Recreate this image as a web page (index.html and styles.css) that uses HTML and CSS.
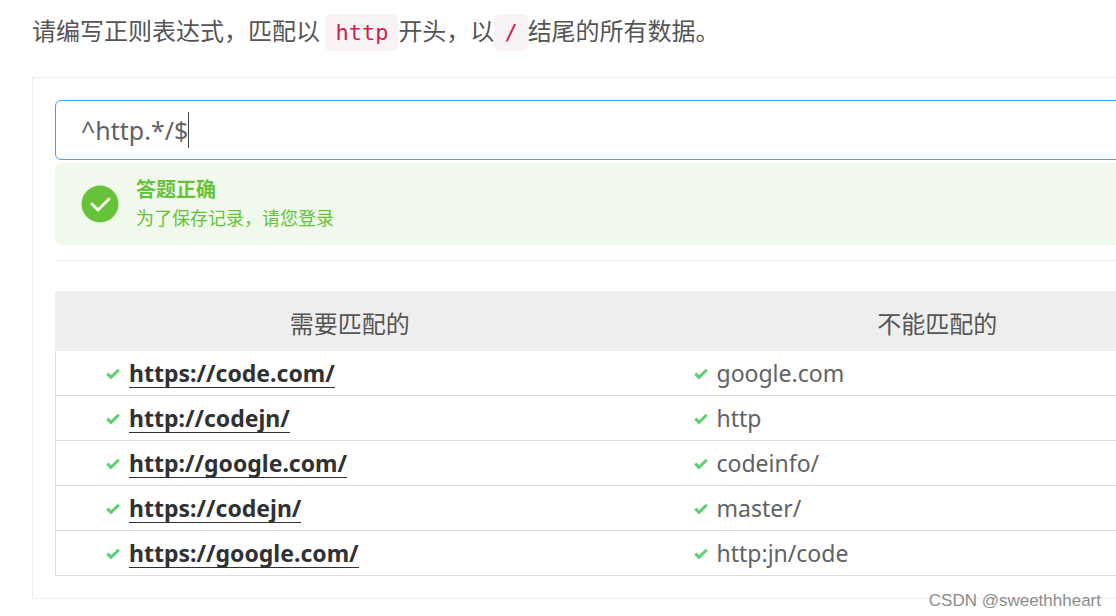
FILE: index.html
```html
<!DOCTYPE html>
<html lang="zh-CN">
<head>
<meta charset="utf-8">
<title>正则表达式练习</title>
<link rel="stylesheet" href="styles.css">
</head>
<body>
<svg class="sprite" aria-hidden="true">
  <symbol id="tick" viewBox="0 0 14 12"><path d="M1.300 5.600 5 9.400 12.800 1.800" fill="none" stroke="currentColor" stroke-width="3"/></symbol>
</svg>
<main class="page">
  <p class="question"><label for="answer">请编写正则表达式，匹配以 <code>http</code>开头，以<code>/</code>结尾的所有数据。</label></p>
  <section class="panel">
    <div class="field">
      <input class="answer" id="answer" type="text" value="^http.*/$" spellcheck="false" autocomplete="off">
      <span class="caret"></span>
    </div>
    <div class="alert" role="status">
      <svg class="alert-icon" viewBox="0 0 38 38" aria-hidden="true"><circle cx="19" cy="19" r="18.5" fill="#67c23a"/><path d="M11 19l6 6 11-11" fill="none" stroke="#f0f9eb" stroke-width="3" stroke-linecap="round" stroke-linejoin="round"/></svg>
      <div class="alert-body">
        <strong class="alert-title">答题正确</strong>
        <p class="alert-text">为了保存记录，请您登录</p>
      </div>
    </div>
    <hr class="divider">
    <table class="cases">
      <thead><tr><th scope="col">需要匹配的</th><th scope="col">不能匹配的</th></tr></thead>
      <tbody>
        <tr><td><svg class="tick"><use href="#tick"/></svg><b class="hit">https://code.com/</b></td><td><svg class="tick"><use href="#tick"/></svg>google.com</td></tr>
        <tr><td><svg class="tick"><use href="#tick"/></svg><b class="hit">http://codejn/</b></td><td><svg class="tick"><use href="#tick"/></svg>http</td></tr>
        <tr><td><svg class="tick"><use href="#tick"/></svg><b class="hit">http://google.com/</b></td><td><svg class="tick"><use href="#tick"/></svg>codeinfo/</td></tr>
        <tr><td><svg class="tick"><use href="#tick"/></svg><b class="hit">https://codejn/</b></td><td><svg class="tick"><use href="#tick"/></svg>master/</td></tr>
        <tr><td><svg class="tick"><use href="#tick"/></svg><b class="hit">https://google.com/</b></td><td><svg class="tick"><use href="#tick"/></svg>http:jn/code</td></tr>
      </tbody>
    </table>
  </section>
</main>
<div class="watermark">CSDN @sweethhheart</div>
</body>
</html>
```
FILE: styles.css
```css
* { box-sizing: border-box; }
body {
  margin: 0;
  overflow: hidden;
  background: #fff;
  color: #606266;
  font-family: "Noto Sans", "Noto Sans CJK SC", sans-serif;
  font-size: 23px;
}
.sprite { position: absolute; width: 0; height: 0; }
.page { padding: 11px 0 0 32px; overflow: hidden; }
.question {
  margin: 0 0 28px;
  font-family: "Noto Sans CJK SC", sans-serif;
  font-size: 24px;
  line-height: 38px;
  color: #555;
  white-space: nowrap;
}
.question code {
  padding: 6px 10px;
  border-radius: 5px;
  background: #f9f2f4;
  color: #c7254e;
  font-family: "DejaVu Sans Mono", monospace;
  font-size: 22px;
  line-height: 1;
}
/* The panel runs on past the right edge of the window. */
.panel {
  width: calc(100% + 139px);
  padding: 22px;
  border: 1px solid #ebeef0;
}
.field { position: relative; }
.answer {
  display: block;
  width: 100%;
  height: 60px;
  padding: 0 25px;
  border: 1px solid #409eff;
  border-radius: 6px;
  outline: 0;
  background: #fff;
  color: #606266;
  font-family: "Noto Sans", sans-serif;
  font-size: 25px;
}
.caret {
  position: absolute;
  top: 12px;
  left: 133px;
  width: 1px;
  height: 36px;
  background: #444;
}
.alert {
  display: flex;
  align-items: center;
  gap: 17px;
  height: 82px;
  margin-top: 3px;
  padding: 0 26px;
  border-radius: 6px;
  background: #f0f9eb;
  color: #67c23a;
  font-family: "Noto Sans CJK SC", sans-serif;
}
.alert-icon { width: 38px; height: 38px; }
.alert-body { padding-bottom: 3px; }
.alert-title { display: block; font-size: 20px; line-height: 28px; }
.alert-text { margin: 0; font-size: 18px; line-height: 28px; }
.divider { height: 1px; margin: 15px 0 30px; border: 0; background: #ececec; }
.cases {
  width: 100%;
  table-layout: fixed;
  border-collapse: collapse;
  border: 1px solid #dcdcdc;
}
.cases thead { border: 1px solid #eee; }
.cases th {
  height: 59px;
  padding: 3px 0 0;
  background: #eee;
  color: #555;
  font-family: "Noto Sans CJK SC", sans-serif;
  font-size: 24px;
  font-weight: 400;
}
.cases td {
  height: 45px;
  padding: 0 0 0 50px;
  border-bottom: 1px solid #dcdcdc;
  line-height: 32px;
}
.tick { width: 14px; height: 12px; margin-right: 9px; color: #5fd070; vertical-align: 2px; }
.hit { display: inline-block; border-bottom: 1px solid #303133; color: #303133; line-height: 28px; }
.watermark {
  position: absolute;
  right: 15px;
  bottom: 4px;
  color: #8c8c8c;
  font-family: "Liberation Sans", sans-serif;
  font-size: 17px;
  line-height: 22px;
}
```
